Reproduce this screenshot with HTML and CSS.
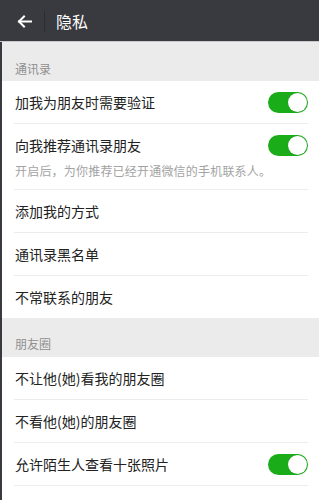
FILE: index.html
```html
<!DOCTYPE html>
<html lang="zh-CN">
<head>
<meta charset="utf-8">
<title>隐私</title>
<link rel="stylesheet" href="styles.css">
</head>
<body>
<div class="page">
  <header class="topbar">
    <div class="back">
      <svg width="15" height="13" viewBox="0 0 15 13" fill="none" stroke="#fff" stroke-width="2" stroke-linecap="square">
        <path d="M14 6.5H2"/>
        <path d="M7 1.5L2 6.5L7 11.5"/>
      </svg>
    </div>
    <div class="divider"></div>
    <div class="title">隐私</div>
  </header>
  <div class="content">
    <div class="section-title">通讯录</div>
    <div class="group">
      <div class="item">
        <div class="row"><span class="label">加我为朋友时需要验证</span><span class="switch"></span></div>
      </div>
      <div class="item tall">
        <div class="row"><span class="label">向我推荐通讯录朋友</span><span class="switch"></span></div>
        <div class="desc">开启后，为你推荐已经开通微信的手机联系人。</div>
      </div>
      <div class="item">
        <div class="row"><span class="label">添加我的方式</span></div>
      </div>
      <div class="item">
        <div class="row"><span class="label">通讯录黑名单</span></div>
      </div>
      <div class="item last">
        <div class="row"><span class="label">不常联系的朋友</span></div>
      </div>
    </div>
    <div class="section-title second">朋友圈</div>
    <div class="group">
      <div class="item">
        <div class="row"><span class="label">不让他(她)看我的朋友圈</span></div>
      </div>
      <div class="item">
        <div class="row"><span class="label">不看他(她)的朋友圈</span></div>
      </div>
      <div class="item">
        <div class="row"><span class="label">允许陌生人查看十张照片</span><span class="switch"></span></div>
      </div>
      <div class="item last">
        <div class="row"><span class="label">朋友圈更新提醒</span></div>
      </div>
    </div>
  </div>
</div>
</body>
</html>
```
FILE: styles.css
```css
* { box-sizing: border-box; }
html, body {
  margin: 0;
  padding: 0;
  background: #393a3f;
}
body {
  font-family: "Noto Sans CJK SC", "Noto Sans", sans-serif;
  width: 319px;
  height: 500px;
  overflow: hidden;
}
.page {
  display: flex;
  flex-direction: column;
}
.topbar {
  height: 42px;
  background: #393a3f;
  border-bottom: 1px solid #c9c9c9;
  display: flex;
  align-items: center;
}
.back {
  width: 44px;
  display: flex;
  align-items: center;
  padding-left: 17px;
  padding-top: 1px;
}
.back svg { display: block; }
.divider {
  width: 1px;
  height: 21px;
  background: #2c2d31;
  margin-top: 1px;
}
.title {
  color: #fff;
  font-size: 16px;
  margin-left: 11px;
  line-height: 20px;
  margin-top: 1px;
}
.content {
  margin-left: 2px;
  background: #ebebeb;
  min-height: 460px;
}
.section-title {
  height: 39px;
  font-size: 12px;
  color: #8f8f8f;
  display: flex;
  align-items: flex-end;
  padding-left: 13px;
  padding-bottom: 4px;
  line-height: 16px;
}
.section-title.second {
  padding-bottom: 5px;
}
.group {
  background: #fff;
  padding: 0 11px 0 12px;
}
.item {
  border-bottom: 1px solid #ececec;
}
.item.last { border-bottom: none; }
.row {
  height: 42px;
  display: flex;
  align-items: center;
  justify-content: space-between;
  padding-left: 1px;
}
.label {
  font-size: 14px;
  color: #222;
  line-height: 20px;
}
.desc {
  font-size: 12px;
  color: #a3a3a3;
  padding-left: 1px;
  margin-top: -4px;
  height: 27px;
  line-height: 18px;
  letter-spacing: 0.2px;
}
.switch {
  width: 40px;
  height: 21px;
  border-radius: 11px;
  background: #1aad19;
  position: relative;
  margin-right: 0;
}
.switch::after {
  content: "";
  position: absolute;
  right: 1px;
  top: 1px;
  width: 19px;
  height: 19px;
  border-radius: 50%;
  background: #fff;
  box-shadow: 0 0 1px rgba(0,0,0,0.25);
}
```
